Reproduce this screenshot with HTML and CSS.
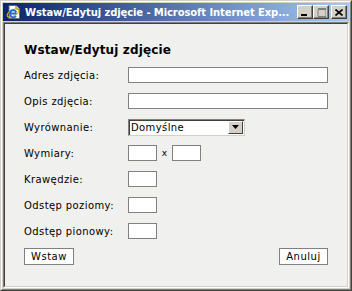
FILE: index.html
```html
<!DOCTYPE html>
<html lang="pl">
<head>
  <meta charset="UTF-8" />
  <title>Wstaw/Edytuj zdjęcie</title>
  <link rel="stylesheet" href="styles.css">
</head>
<body>

  <div class="window">
    <div class="frame">

      <!-- Title bar -->
      <div class="titlebar">
        <svg class="app-icon" width="16" height="16" viewBox="0 0 16 16">
          <path d="M3 1.5h7l3.5 3.5v9.5h-10.5z" fill="#fff" stroke="#6b6b6b"/>
          <path d="M10 1.5v3.5h3.5" fill="#e8e8e8" stroke="#6b6b6b"/>
          <ellipse cx="7" cy="9" rx="6.5" ry="3" fill="none" stroke="#f0b400" stroke-width="1.2" transform="rotate(-30 7 9)"/>
          <path d="M10.5 9.5h-6.5a3.2 3.2 0 0 1 6.2-1.2M4.2 10.5a3.2 3.2 0 0 0 5.8 1.5" fill="none" stroke="#1c6fd9" stroke-width="2"/>
        </svg>
        <span class="title-text">Wstaw/Edytuj zdjęcie - Microsoft Internet Exp...</span>
        <div class="caption-buttons">
          <span class="cap-btn">
            <svg width="8" height="7" viewBox="0 0 8 7"><rect x="0" y="5" width="6" height="2" fill="#000"/></svg>
          </span>
          <span class="cap-btn disabled">
            <svg width="9" height="9" viewBox="0 0 9 9"><path d="M1 1.5h8v7h-8z" fill="none" stroke="#808080"/><path d="M1 0.5h8" stroke="#808080" stroke-width="2"/></svg>
          </span>
          <span class="cap-btn close">
            <svg width="8" height="7" viewBox="0 0 8 7"><path d="M0.5 0.5l7 6M7.5 0.5l-7 6" stroke="#000" stroke-width="1.6"/></svg>
          </span>
        </div>
      </div>

      <!-- Dialog body -->
      <div class="client">
        <div class="content">
          <h1>Wstaw/Edytuj zdjęcie</h1>

          <div class="row">
            <label>Adres zdjęcia:</label>
            <input type="text" class="wide">
          </div>
          <div class="row">
            <label>Opis zdjęcia:</label>
            <input type="text" class="wide">
          </div>
          <div class="row">
            <label>Wyrównanie:</label>
            <div class="select">
              <span class="select-value">Domyślne</span>
              <span class="select-arrow">
                <svg width="7" height="4" viewBox="0 0 7 4"><path d="M0 0h7l-3.5 4z" fill="#000"/></svg>
              </span>
            </div>
          </div>
          <div class="row">
            <label>Wymiary:</label>
            <input type="text" class="small">
            <span class="times">x</span>
            <input type="text" class="small">
          </div>
          <div class="row">
            <label>Krawędzie:</label>
            <input type="text" class="small">
          </div>
          <div class="row">
            <label>Odstęp poziomy:</label>
            <input type="text" class="small">
          </div>
          <div class="row">
            <label>Odstęp pionowy:</label>
            <input type="text" class="small">
          </div>

          <div class="actions">
            <button class="btn btn-insert">Wstaw</button>
            <button class="btn btn-cancel">Anuluj</button>
          </div>
        </div>
      </div>

    </div>
  </div>

</body>
</html>
```

FILE: styles.css
```css
* {
  box-sizing: border-box;
}

html, body {
  margin: 0;
  padding: 0;
  background: #d4d0c8;
}

.window {
  width: 352px;
  height: 291px;
  background: #d4d0c8;
  border: 1px solid;
  border-color: #d4d0c8 #404040 #404040 #d4d0c8;
}

.frame {
  height: 100%;
  border: 1px solid;
  border-color: #fff #808080 #808080 #fff;
  padding: 1px;
  display: flex;
  flex-direction: column;
}

/* title bar */
.titlebar {
  height: 18px;
  flex: none;
  display: flex;
  align-items: center;
  padding: 0 2px 0 3px;
  background: linear-gradient(to right, #0a246a, #a6caf0);
}

.app-icon {
  flex: none;
  margin-right: 3px;
}

.title-text {
  flex: 1;
  color: #fff;
  font-family: "DejaVu Sans", Verdana, sans-serif;
  font-weight: bold;
  font-size: 10px;
  letter-spacing: -0.1px;
  white-space: nowrap;
  overflow: hidden;
}

.caption-buttons {
  display: flex;
  flex: none;
}

.cap-btn {
  width: 16px;
  height: 14px;
  background: #d4d0c8;
  border: 1px solid;
  border-color: #fff #404040 #404040 #fff;
  box-shadow: inset -1px -1px 0 #808080;
  display: flex;
  align-items: center;
  justify-content: center;
}

.cap-btn.close {
  margin-left: 2px;
}

/* client area */
.client {
  flex: 1;
  margin-top: 1px;
  border: 1px solid;
  border-color: #808080 #fff #fff #808080;
}

.content {
  height: 100%;
  background: #f0f0ee;
  border: 1px solid;
  border-color: #404040 #d4d0c8 #d4d0c8 #404040;
  padding: 19px 19px 0 19px;
  font-family: "DejaVu Sans", Verdana, sans-serif;
  font-size: 10px;
  color: #000;
}

h1 {
  margin: 0 0 4px 0;
  font-size: 12px;
  line-height: 15px;
  font-weight: bold;
  letter-spacing: 0.15px;
}

.row {
  height: 26px;
  display: flex;
  align-items: center;
}

.row label {
  width: 104px;
  flex: none;
  letter-spacing: 0.4px;
}

input[type="text"] {
  height: 16px;
  border: 1px solid #808080;
  background: #fff;
  padding: 0;
  margin: 0;
}

.wide {
  width: 200px;
}

.small {
  width: 29px;
}

.times {
  width: 15px;
  text-align: center;
  font-size: 9px;
}

.select {
  width: 117px;
  height: 17px;
  display: flex;
  align-items: center;
  background: #fff;
  border: 1px solid;
  border-color: #808080 #d4d0c8 #d4d0c8 #808080;
  box-shadow: inset 1px 1px 0 #404040;
  padding: 1px 1px 1px 2px;
}

.select-value {
  flex: 1;
  letter-spacing: 0.4px;
}

.select-arrow {
  width: 15px;
  height: 13px;
  background: #d4d0c8;
  border: 1px solid;
  border-color: #fff #404040 #404040 #fff;
  display: flex;
  align-items: center;
  justify-content: center;
}

.actions {
  display: flex;
  justify-content: space-between;
  margin-top: 4px;
}

.btn {
  height: 17px;
  background: #fff;
  border: 1px solid #808080;
  font-family: "DejaVu Sans", Verdana, sans-serif;
  font-size: 10px;
  letter-spacing: 0.5px;
  color: #000;
  padding: 0;
}

.btn-insert {
  width: 50px;
}

.btn-cancel {
  width: 49px;
}
```
